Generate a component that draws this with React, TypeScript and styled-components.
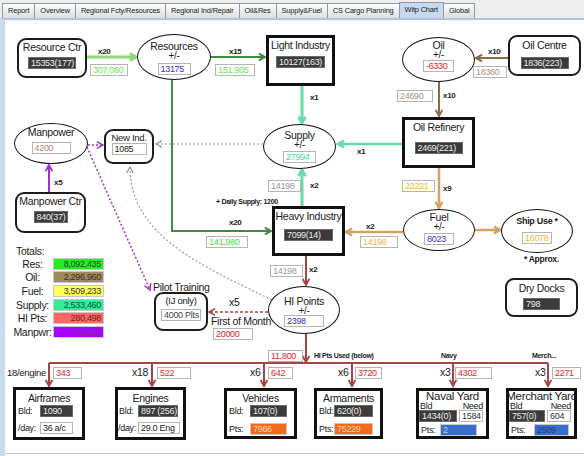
import React from 'react';
import styled, { createGlobalStyle } from 'styled-components';

// canvas origin in page coordinates (tab bar + panel border)
const CX = 5;
const CY = 20;
const W = 579;
const H = 433;

const GlobalStyle = createGlobalStyle`
  body {
    margin: 0;
    background: #eeeeee;
    font-family: "Liberation Sans", Arial, sans-serif;
    letter-spacing: -0.3px;
    color: #1a1a1a;
  }
`;

const C = {
  lgreen: '#8fd87a',
  dgreen: '#3f8a3f',
  teal: '#62dfa9',
  brown: '#8a6a48',
  tan: '#d6a264',
  red: '#a54545',
  purple: '#9b36c8',
  gray: '#9a9a9a',
};

type Pos = { $x: number; $y: number };

const Frame = styled.div`
  width: 584px;
  height: 456px;
  display: flex;
  flex-direction: column;
  overflow: hidden;
`;

const TabBar = styled.div`
  height: 18px;
  box-sizing: border-box;
  display: flex;
  align-items: flex-end;
  padding-left: 2px;
  background: #eeeeee;
`;

const Tab = styled.div<{ $on?: boolean }>`
  height: ${(p) => (p.$on ? 16 : 15)}px;
  box-sizing: border-box;
  padding: 0 5px;
  margin-right: -1px;
  border: 1px solid #8d9aa8;
  border-bottom: none;
  background: ${(p) => (p.$on ? '#c6d9ef' : 'linear-gradient(#fdfdfd, #dedede)')};
  font-size: 7.4px;
  letter-spacing: -0.15px;
  line-height: 14px;
  white-space: nowrap;
`;

const Panel = styled.div`
  height: 438px;
  box-sizing: border-box;
  border-top: 2px solid #aac6e6;
  border-left: 5px solid #c9dbef;
  background: #fff;
`;

const Canvas = styled.div`
  position: relative;
  width: ${W}px;
  height: ${H}px;
  border-bottom: 1px solid #c4c4c4;
`;

const Wires = styled.svg`
  position: absolute;
  left: 0;
  top: 0;
`;

const Node = styled.div<Pos & { $w: number; $h: number; $pt?: number; $gap?: number }>`
  position: absolute;
  left: ${(p) => p.$x - CX}px;
  top: ${(p) => p.$y - CY}px;
  width: ${(p) => p.$w}px;
  height: ${(p) => p.$h}px;
  box-sizing: border-box;
  padding-top: ${(p) => p.$pt ?? 0}px;
  display: flex;
  flex-direction: column;
  align-items: center;
  gap: ${(p) => p.$gap ?? 0}px;
  background: #fff;
  white-space: nowrap;
`;

const RoundNode = styled(Node)`
  border: 2px solid #1c1c1c;
  border-radius: 9px;
`;

const HeavyNode = styled(Node)`
  border: 3px solid #111;
`;

const OvalNode = styled(Node)`
  border: 1.5px solid #111;
  border-radius: 50%;
`;

const Title = styled.span<{ $s?: number; $lh?: number; $b?: boolean }>`
  font-size: ${(p) => p.$s ?? 10.5}px;
  line-height: ${(p) => p.$lh ?? 12}px;
  font-weight: ${(p) => (p.$b ? 700 : 400)};
`;

const PlusMinus = styled.span`
  font-size: 10px;
  line-height: 8px;
`;

type Tone = 'dark' | 'plain' | 'fill';

const Val = styled.div<{ $w: number; $tone?: Tone; $bg?: string; $c?: string; $mt?: number }>`
  flex-shrink: 0;
  box-sizing: border-box;
  width: ${(p) => p.$w}px;
  height: 12px;
  margin-top: ${(p) => p.$mt ?? 0}px;
  padding: 0 2px;
  font-size: 9px;
  line-height: 10px;
  overflow: hidden;
  white-space: nowrap;
  border: 1px solid
    ${(p) => (p.$tone === 'dark' ? '#6a6a6a' : p.$tone === 'fill' ? '#c8c8c8' : '#b4b4b4')};
  background: ${(p) => (p.$tone === 'dark' ? '#3b3b3b' : p.$bg ?? '#fff')};
  color: ${(p) => (p.$tone === 'dark' ? '#ececec' : p.$c ?? '#222')};
`;

const FloatVal = styled(Val)<Pos>`
  position: absolute;
  left: ${(p) => p.$x - CX}px;
  top: ${(p) => p.$y - CY}px;
`;

const Tag = styled.span<Pos & { $s?: number; $b?: boolean }>`
  position: absolute;
  left: ${(p) => p.$x - CX}px;
  top: ${(p) => p.$y - CY}px;
  font-size: ${(p) => p.$s ?? 8}px;
  line-height: 1;
  font-weight: ${(p) => (p.$b ? 700 : 400)};
  white-space: nowrap;
`;

const BoxRow = styled.div<{ $mt?: number; $pl?: number; $gap?: number }>`
  align-self: stretch;
  display: flex;
  align-items: center;
  gap: ${(p) => p.$gap ?? 0}px;
  margin-top: ${(p) => p.$mt ?? 0}px;
  padding-left: ${(p) => p.$pl ?? 0}px;
`;

const RowLabel = styled.span<{ $w: number }>`
  flex-shrink: 0;
  width: ${(p) => p.$w}px;
  font-size: 9px;
  line-height: 12px;
`;

const SubHead = styled.div`
  align-self: stretch;
  display: flex;
  justify-content: space-between;
  padding: 0 3px 0 1px;
  font-size: 9px;
  line-height: 8px;
`;

const Totals = styled.div<Pos>`
  position: absolute;
  left: ${(p) => p.$x - CX}px;
  top: ${(p) => p.$y - CY}px;
  display: grid;
  grid-template-columns: 41px 51px;
  row-gap: 1.7px;
  align-items: center;
`;

const TotalsHead = styled.div`
  grid-column: 1 / -1;
  padding-left: 4px;
  margin-bottom: -1px;
  font-size: 10.5px;
  line-height: 12px;
`;

const TotalLabel = styled.div`
  font-size: 10.5px;
  line-height: 12px;
  text-align: center;
`;

const TotalVal = styled.div<{ $bg: string; $c: string }>`
  height: 12px;
  box-sizing: border-box;
  padding-right: 2px;
  border: 1px solid #c8c8c8;
  background: ${(p) => p.$bg};
  color: ${(p) => p.$c};
  font-size: 9px;
  line-height: 10px;
  text-align: right;
`;

type Pt = [number, number];

const Head = ({ x, y, ang, s = 7 }: { x: number; y: number; ang: number; s?: number }) => {
  const p = (da: number) => `${x - s * Math.cos(ang + da)},${y - s * Math.sin(ang + da)}`;
  return <polyline points={`${p(-0.5)} ${x},${y} ${p(0.5)}`} strokeDasharray="none" />;
};

interface FlowProps {
  pts: Pt[];
  color: string;
  w?: number;
  dash?: string;
  head?: boolean;
}

const Flow = ({ pts, color, w = 2, dash, head = true }: FlowProps) => {
  const d = pts.map(([x, y], i) => `${i ? 'L' : 'M'}${x} ${y}`).join(' ');
  const [ax, ay] = pts[pts.length - 2];
  const [bx, by] = pts[pts.length - 1];
  return (
    <g stroke={color} strokeWidth={w} fill="none">
      <path d={d} strokeDasharray={dash} />
      {head && <Head x={bx} y={by} ang={Math.atan2(by - ay, bx - ax)} />}
    </g>
  );
};

const tabs = [
  'Report',
  'Overview',
  'Regional Fcty/Resources',
  'Regional Ind/Repair',
  'Oil&Res',
  'Supply&Fuel',
  'CS Cargo Planning',
  'Witp Chart',
  'Global',
];

const totals = [
  { label: 'Res:', value: '8,092,435', bg: '#22ee22', c: '#1f4a1f' },
  { label: 'Oil:', value: '2,296,960', bg: '#a08a5e', c: '#3a3020' },
  { label: 'Fuel:', value: '3,509,233', bg: '#ffff55', c: '#3a3a20' },
  { label: 'Supply:', value: '2,533,460', bg: '#33ee99', c: '#1a4a3a' },
  { label: 'HI Pts:', value: '280,498', bg: '#ff6666', c: '#702020' },
  { label: 'Manpwr:', value: '333,954', bg: '#aa00ff', c: '#7f30a8' },
];

const floats = [
  { x: 90, y: 64, w: 38, v: '307,060', c: '#6fe060' },
  { x: 215, y: 64, w: 40, v: '151,905', c: '#6fe060' },
  { x: 473, y: 66, w: 34, v: '18360', c: '#a89480' },
  { x: 397, y: 90, w: 36, v: '24690', c: '#a89480' },
  { x: 402, y: 180, w: 33, v: '22221', c: '#f5b342' },
  { x: 268, y: 180, w: 33, v: '14198', c: '#999' },
  { x: 206, y: 236, w: 42, v: '141,980', c: '#3ee63e' },
  { x: 360, y: 236, w: 38, v: '14198', c: '#f5b342' },
  { x: 270, y: 265, w: 33, v: '14198', c: '#999' },
  { x: 213, y: 328, w: 40, v: '20000', c: '#ee2222' },
  { x: 268, y: 350, w: 35, v: '11,800', c: '#ee2222' },
  { x: 53, y: 367, w: 29, v: '343', c: '#ee2222' },
  { x: 157, y: 367, w: 34, v: '522', c: '#ee2222' },
  { x: 268, y: 367, w: 25, v: '642', c: '#ee2222' },
  { x: 355, y: 367, w: 27, v: '3720', c: '#ee2222' },
  { x: 455, y: 367, w: 37, v: '4302', c: '#ee2222' },
  { x: 552, y: 367, w: 29, v: '2271', c: '#ee2222' },
];

const tags = [
  { x: 98, y: 48, t: 'x20', b: true },
  { x: 229, y: 48, t: 'x15', b: true },
  { x: 488, y: 48, t: 'x10', b: true },
  { x: 310, y: 94, t: 'x1', b: true },
  { x: 443, y: 92, t: 'x10', b: true },
  { x: 357, y: 148, t: 'x1', b: true },
  { x: 310, y: 182, t: 'x2', b: true },
  { x: 443, y: 185, t: 'x9', b: true },
  { x: 216, y: 198, t: '+ Daily Supply: 1200', b: true, s: 7 },
  { x: 229, y: 219, t: 'x20', b: true },
  { x: 366, y: 223, t: 'x2', b: true },
  { x: 309, y: 266, t: 'x2', b: true },
  { x: 524, y: 255, t: '* Approx.', b: true, s: 8.5 },
  { x: 54, y: 179, t: 'x5', b: true },
  { x: 314, y: 352, t: 'HI Pts Used (below)', b: true, s: 7 },
  { x: 441, y: 352, t: 'Navy', b: true, s: 7 },
  { x: 532, y: 352, t: 'Merch...', b: true, s: 7 },
  { x: 153, y: 282, t: 'Pilot Training', s: 10.5 },
  { x: 229, y: 297, t: 'x5', s: 10.5 },
  { x: 211, y: 316, t: 'First of Month', s: 10.5 },
  { x: 7, y: 368, t: '18/engine', s: 9.5 },
  { x: 132, y: 367, t: 'x18', s: 10.5 },
  { x: 250, y: 367, t: 'x6', s: 10.5 },
  { x: 338, y: 367, t: 'x6', s: 10.5 },
  { x: 440, y: 367, t: 'x3', s: 10.5 },
  { x: 535, y: 367, t: 'x3', s: 10.5 },
];

const drops = [49, 152, 264, 352, 453, 548];

const Wiring = () => (
  <Wires width={W} height={H} viewBox={`${CX} ${CY} ${W} ${H}`}>
    <Flow pts={[[87, 57], [136, 57]]} color={C.lgreen} w={3} />
    <Flow pts={[[211, 57], [265, 57]]} color={C.dgreen} />
    <Flow pts={[[172, 80], [172, 231], [271, 231]]} color={C.dgreen} />
    <Flow pts={[[302, 86], [302, 123]]} color={C.teal} w={3} />
    <Flow pts={[[302, 206], [302, 170]]} color={C.teal} w={3} />
    <Flow pts={[[402, 144], [338, 144]]} color={C.teal} w={2.5} />
    <Flow pts={[[508, 58], [476, 58]]} color={C.brown} />
    <Flow pts={[[439, 82], [439, 116]]} color={C.brown} />
    <Flow pts={[[439, 168], [439, 208]]} color={C.tan} w={2.5} />
    <Flow pts={[[403, 232], [346, 232]]} color={C.tan} w={2.5} />
    <Flow pts={[[475, 230], [500, 230]]} color={C.tan} w={2.5} />
    <Flow pts={[[306, 256], [306, 285]]} color={C.red} />
    <Flow pts={[[306, 334], [306, 362]]} color={C.red} />
    <Flow pts={[[49, 363], [548, 363]]} color={C.red} head={false} />
    {drops.map((x) => (
      <Flow key={x} pts={[[x, 363], [x, 386]]} color={C.red} />
    ))}
    <Flow pts={[[268, 312], [209, 312]]} color={C.red} w={1.5} dash="3 2" />
    <Flow pts={[[49, 192], [49, 165]]} color={C.purple} />
    <Flow pts={[[88, 145], [103, 145]]} color={C.purple} w={1.5} dash="2 2" />
    <Flow pts={[[87, 147], [150, 290]]} color={C.purple} w={1.5} dash="2 2" />
    <Flow pts={[[263, 144], [156, 144]]} color={C.gray} w={1.2} dash="2 2" />
    <g stroke={C.gray} strokeWidth={1.2} fill="none">
      <path d="M272 300 C200 265 130 235 130 167" strokeDasharray="2 2" />
      <Head x={130} y={167} ang={-Math.PI / 2} />
    </g>
  </Wires>
);

export default function App() {
  return (
    <>
      <GlobalStyle />
      <Frame>
        <TabBar>
          {tabs.map((t) => (
            <Tab key={t} $on={t === 'Witp Chart'}>
              {t}
            </Tab>
          ))}
        </TabBar>
        <Panel>
          <Canvas>
            <Wiring />

            <RoundNode $x={17} $y={38} $w={70} $h={40} $pt={1} $gap={4}>
              <Title>Resource Ctr</Title>
              <Val $w={48} $tone="dark">15353(177)</Val>
            </RoundNode>

            <OvalNode $x={137} $y={34} $w={74} $h={46} $pt={6}>
              <Title $lh={11}>Resources</Title>
              <PlusMinus>+/-</PlusMinus>
              <Val $w={33} $c="#3333cc" $mt={3}>13175</Val>
            </OvalNode>

            <HeavyNode $x={266} $y={35} $w={69} $h={51} $pt={1} $gap={5}>
              <Title>Light Industry</Title>
              <Val $w={49} $tone="dark">10127(163)</Val>
            </HeavyNode>

            <OvalNode $x={402} $y={37} $w={73} $h={45} $pt={2}>
              <Title $lh={11}>Oil</Title>
              <PlusMinus>+/-</PlusMinus>
              <Val $w={31} $c="#ee2222" $mt={1}>-6330</Val>
            </OvalNode>

            <RoundNode $x={508} $y={35} $w={73} $h={41} $pt={2} $gap={6}>
              <Title>Oil Centre</Title>
              <Val $w={48} $tone="dark">1836(223)</Val>
            </RoundNode>

            <HeavyNode $x={402} $y={117} $w={73} $h={51} $pt={1} $gap={9}>
              <Title>Oil Refinery</Title>
              <Val $w={48} $tone="dark">2469(221)</Val>
            </HeavyNode>

            <OvalNode $x={14} $y={123} $w={74} $h={41} $pt={3}>
              <Title $lh={11}>Manpower</Title>
              <Val $w={39} $c="#c08070" $mt={4}>4200</Val>
            </OvalNode>

            <RoundNode $x={104} $y={129} $w={50} $h={35} $pt={1}>
              <Title $s={9.5} $lh={11}>New Ind.</Title>
              <Val $w={35}>1085</Val>
            </RoundNode>

            <OvalNode $x={263} $y={124} $w={73} $h={45} $pt={5}>
              <Title $lh={11}>Supply</Title>
              <PlusMinus>+/-</PlusMinus>
              <Val $w={33} $c="#44dda0" $mt={2}>27994</Val>
            </OvalNode>

            <RoundNode $x={15} $y={192} $w={71} $h={41} $pt={1} $gap={4}>
              <Title>Manpower Ctr</Title>
              <Val $w={34} $tone="dark">840(37)</Val>
            </RoundNode>

            <HeavyNode $x={272} $y={206} $w={73} $h={50} $pt={1} $gap={7}>
              <Title>Heavy Industry</Title>
              <Val $w={49} $tone="dark">7099(14)</Val>
            </HeavyNode>

            <OvalNode $x={403} $y={209} $w={72} $h={42} $pt={2}>
              <Title $lh={11}>Fuel</Title>
              <PlusMinus>+/-</PlusMinus>
              <Val $w={30} $c="#3333cc" $mt={2}>8023</Val>
            </OvalNode>

            <OvalNode $x={501} $y={209} $w={72} $h={44} $pt={6}>
              <Title $s={9} $lh={11} $b>Ship Use *</Title>
              <Val $w={30} $c="#f5b342" $mt={5}>16078</Val>
            </OvalNode>

            <RoundNode $x={505} $y={278} $w={73} $h={39} $pt={2} $gap={4}>
              <Title>Dry Docks</Title>
              <Val $w={37} $tone="dark">798</Val>
            </RoundNode>

            <OvalNode $x={268} $y={286} $w={72} $h={48} $pt={9}>
              <Title $lh={11}>HI Points</Title>
              <PlusMinus>+/-</PlusMinus>
              <Val $w={40} $c="#3333cc">2398</Val>
            </OvalNode>

            <RoundNode $x={154} $y={292} $w={54} $h={39} $pt={1} $gap={3}>
              <Title $s={9.5} $lh={11}>(IJ only)</Title>
              <Val $w={40} $c="#444">4000 Plts</Val>
            </RoundNode>

            <Totals $x={12} $y={245}>
              <TotalsHead>Totals:</TotalsHead>
              {totals.map((r) => (
                <React.Fragment key={r.label}>
                  <TotalLabel>{r.label}</TotalLabel>
                  <TotalVal $bg={r.bg} $c={r.c}>
                    {r.value}
                  </TotalVal>
                </React.Fragment>
              ))}
            </Totals>

            <HeavyNode $x={13} $y={387} $w={72} $h={53} $pt={2}>
              <Title>Airframes</Title>
              <BoxRow $mt={1} $pl={2}>
                <RowLabel $w={22}>Bld:</RowLabel>
                <Val $w={33} $tone="dark">1090</Val>
              </BoxRow>
              <BoxRow $mt={5} $pl={2}>
                <RowLabel $w={22}>/day:</RowLabel>
                <Val $w={33}>36 a/c</Val>
              </BoxRow>
            </HeavyNode>

            <HeavyNode $x={115} $y={387} $w={71} $h={53} $pt={2}>
              <Title>Engines</Title>
              <BoxRow $mt={1} $pl={1}>
                <RowLabel $w={19}>Bld:</RowLabel>
                <Val $w={40} $tone="dark">897 (256)</Val>
              </BoxRow>
              <BoxRow $mt={5} $pl={0}>
                <RowLabel $w={20}>/day:</RowLabel>
                <Val $w={42}>29.0 Eng</Val>
              </BoxRow>
            </HeavyNode>

            <HeavyNode $x={224} $y={388} $w={73} $h={51} $pt={1}>
              <Title>Vehicles</Title>
              <BoxRow $mt={1} $pl={2}>
                <RowLabel $w={21}>Bld:</RowLabel>
                <Val $w={37} $tone="dark">107(0)</Val>
              </BoxRow>
              <BoxRow $mt={6} $pl={2}>
                <RowLabel $w={21}>Pts:</RowLabel>
                <Val $w={37} $tone="fill" $bg="#f26a1c" $c="#fbd6b8">7966</Val>
              </BoxRow>
            </HeavyNode>

            <HeavyNode $x={314} $y={388} $w={69} $h={51} $pt={1}>
              <Title>Armaments</Title>
              <BoxRow $mt={1} $pl={2}>
                <RowLabel $w={15}>Bld:</RowLabel>
                <Val $w={39} $tone="dark">620(0)</Val>
              </BoxRow>
              <BoxRow $mt={6} $pl={2}>
                <RowLabel $w={15}>Pts:</RowLabel>
                <Val $w={39} $tone="fill" $bg="#f26a1c" $c="#fbd6b8">75229</Val>
              </BoxRow>
            </HeavyNode>

            <HeavyNode $x={416} $y={388} $w={73} $h={51}>
              <Title $s={11.5} $lh={11}>Naval Yard</Title>
              <SubHead>
                <span>Bld</span>
                <span>Need</span>
              </SubHead>
              <BoxRow $gap={2}>
                <Val $w={38} $tone="dark">1434(0)</Val>
                <Val $w={24} $c="#333">1584</Val>
              </BoxRow>
              <BoxRow $mt={2} $pl={2}>
                <RowLabel $w={19}>Pts:</RowLabel>
                <Val $w={37} $tone="fill" $bg="#3a6dd0" $c="#b8ccf4">2</Val>
              </BoxRow>
            </HeavyNode>

            <HeavyNode $x={506} $y={388} $w={71} $h={51}>
              <Title $s={11.5} $lh={11}>Merchant Yard</Title>
              <SubHead>
                <span>Bld</span>
                <span>Need</span>
              </SubHead>
              <BoxRow $gap={2}>
                <Val $w={36} $tone="dark">757(0)</Val>
                <Val $w={24} $c="#333">604</Val>
              </BoxRow>
              <BoxRow $mt={2} $pl={2}>
                <RowLabel $w={23}>Pts:</RowLabel>
                <Val $w={35} $tone="fill" $bg="#3a6dd0" $c="#1e3c86">2509</Val>
              </BoxRow>
            </HeavyNode>

            {floats.map((f, i) => (
              <FloatVal key={i} $x={f.x} $y={f.y} $w={f.w} $c={f.c}>
                {f.v}
              </FloatVal>
            ))}

            {tags.map((t, i) => (
              <Tag key={i} $x={t.x} $y={t.y} $s={t.s} $b={t.b}>
                {t.t}
              </Tag>
            ))}
          </Canvas>
        </Panel>
      </Frame>
    </>
  );
}
